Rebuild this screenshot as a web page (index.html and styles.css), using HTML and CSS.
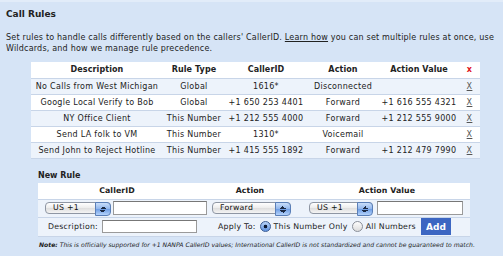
FILE: index.html
```html
<!DOCTYPE html>
<html lang="en">
<head>
    <meta charset="UTF-8">
    <title>Call Rules</title>
    <link rel="stylesheet" href="styles.css">
</head>
<body>
    <div class="page">
        <h1 class="title">Call Rules</h1>
        <p class="intro">
            Set rules to handle calls differently based on the callers' CallerID. <a href="#">Learn how</a> you can set multiple rules at once, use<br>
            Wildcards, and how we manage rule precedence.
        </p>

        <table class="rules">
            <thead>
                <tr>
                    <th class="col-desc">Description</th>
                    <th class="col-type">Rule Type</th>
                    <th class="col-id">CallerID</th>
                    <th class="col-action">Action</th>
                    <th class="col-value">Action Value</th>
                    <th class="col-del"><span class="del-all">x</span></th>
                </tr>
            </thead>
            <tbody>
                <tr>
                    <td>No Calls from West Michigan</td>
                    <td>Global</td>
                    <td>1616*</td>
                    <td>Disconnected</td>
                    <td></td>
                    <td><a href="#" class="del">X</a></td>
                </tr>
                <tr>
                    <td>Google Local Verify to Bob</td>
                    <td>Global</td>
                    <td>+1 650 253 4401</td>
                    <td>Forward</td>
                    <td>+1 616 555 4321</td>
                    <td><a href="#" class="del">X</a></td>
                </tr>
                <tr>
                    <td>NY Office Client</td>
                    <td>This Number</td>
                    <td>+1 212 555 4000</td>
                    <td>Forward</td>
                    <td>+1 212 555 9000</td>
                    <td><a href="#" class="del">X</a></td>
                </tr>
                <tr>
                    <td>Send LA folk to VM</td>
                    <td>This Number</td>
                    <td>1310*</td>
                    <td>Voicemail</td>
                    <td></td>
                    <td><a href="#" class="del">X</a></td>
                </tr>
                <tr>
                    <td>Send John to Reject Hotline</td>
                    <td>This Number</td>
                    <td>+1 415 555 1892</td>
                    <td>Forward</td>
                    <td>+1 212 479 7990</td>
                    <td><a href="#" class="del">X</a></td>
                </tr>
            </tbody>
        </table>

        <div class="new-rule">
            <h2 class="sub-title">New Rule</h2>
            <div class="rule-form">
                <div class="form-head">
                    <span class="head-id">CallerID</span>
                    <span class="head-action">Action</span>
                    <span class="head-value">Action Value</span>
                </div>
                <div class="form-row">
                    <div class="select cc-select">
                        <select><option>US +1</option></select>
                    </div>
                    <input type="text" class="field id-field">
                    <div class="select action-select">
                        <select><option>Forward</option></select>
                    </div>
                    <div class="select cc-select value-cc">
                        <select><option>US +1</option></select>
                    </div>
                    <input type="text" class="field value-field">
                </div>
                <div class="form-row desc-row">
                    <label class="desc-label">Description:</label>
                    <input type="text" class="field desc-field">
                    <span class="apply-label">Apply To:</span>
                    <label class="radio"><span class="dot checked"></span>This Number Only</label>
                    <label class="radio"><span class="dot"></span>All Numbers</label>
                    <button class="add-btn">Add</button>
                </div>
            </div>
            <p class="note"><b>Note:</b> This is officially supported for +1 NANPA CallerID values; International CallerID is not standardized and cannot be guaranteed to match.</p>
        </div>
    </div>
</body>
</html>
```

FILE: styles.css
```css
:root {
    --bg-blue: #d6e4f6;
    --row-blue: #edf3fb;
    --line: #c8d5e8;
    --text: #222;
}

* {
    margin: 0;
    padding: 0;
    box-sizing: border-box;
    font-family: 'DejaVu Sans', Verdana, sans-serif;
}

body {
    background: var(--bg-blue);
    color: var(--text);
    height: 256px;
    overflow: hidden;
    border-top: 2px solid #e2ecf9;
}

.page {
    padding: 6px 6px 0;
}

.title {
    font-size: 9px;
    font-weight: bold;
    line-height: 12px;
}

.intro {
    font-size: 8px;
    letter-spacing: 0.2px;
    line-height: 11px;
    margin-top: 12px;
    white-space: nowrap;
}

.intro a {
    color: var(--text);
}

.rules {
    margin: 8px 0 0 25px;
    width: 449px;
    border-collapse: collapse;
    background: white;
    font-size: 8px;
    letter-spacing: 0.3px;
    text-align: center;
}

.rules th {
    font-weight: bold;
    letter-spacing: 0.1px;
    height: 16px;
    border-bottom: 1px solid var(--line);
}

.rules td {
    height: 16px;
    border-bottom: 1px solid var(--line);
    white-space: nowrap;
}

.rules tbody tr:nth-child(odd) {
    background: var(--row-blue);
}

.col-desc { width: 132px; }
.col-type { width: 62px; }
.col-id { width: 82px; }
.col-action { width: 72px; }
.col-value { width: 80px; }
.col-del { width: 21px; }

.del-all {
    color: #e0141c;
    font-weight: bold;
    font-size: 8px;
}

.del {
    color: #555;
}

.new-rule {
    margin: 12px 0 0 32px;
    width: 432px;
}

.sub-title {
    font-size: 8px;
    font-weight: bold;
    line-height: 10px;
}

.rule-form {
    background: white;
    margin-top: 2px;
    font-size: 7.8px;
    letter-spacing: 0.25px;
}

.form-head {
    display: flex;
    height: 17px;
    align-items: center;
    font-weight: bold;
    letter-spacing: 0.1px;
    border-bottom: 1px solid var(--line);
}

.head-id { width: 158px; text-align: center; }
.head-action { width: 108px; text-align: center; }
.head-value { width: 166px; text-align: center; }

.form-row {
    display: flex;
    align-items: center;
    height: 18px;
    padding-left: 7px;
    background: var(--row-blue);
    border-bottom: 1px solid var(--line);
}

.select {
    position: relative;
    height: 12px;
}

.select select {
    appearance: none;
    -webkit-appearance: none;
    width: 100%;
    height: 12px;
    border: 1px solid #8e96a3;
    border-radius: 4px;
    background: linear-gradient(#ffffff, #ececec 50%, #dedede 51%, #f4f4f4);
    font-size: 7.8px;
    letter-spacing: 0.25px;
    padding-left: 7px;
    line-height: 10px;
    color: #111;
}

.select::after {
    content: '';
    position: absolute;
    top: 0;
    right: 0;
    width: 14px;
    height: 12px;
    border-radius: 0 4px 4px 0;
    border: 1px solid #5a7fb8;
    background:
        linear-gradient(to bottom right, transparent 50%, #1c2a44 50%) 4px 2.5px / 3px 3px no-repeat,
        linear-gradient(to bottom left, transparent 50%, #1c2a44 50%) 7px 2.5px / 3px 3px no-repeat,
        linear-gradient(to top right, transparent 50%, #1c2a44 50%) 4px 6.5px / 3px 3px no-repeat,
        linear-gradient(to top left, transparent 50%, #1c2a44 50%) 7px 6.5px / 3px 3px no-repeat,
        linear-gradient(#c9defa, #8fb5ec 50%, #6b9be3 51%, #b5d3fb);
}

.cc-select { width: 66px; }
.action-select { width: 79px; margin-left: 5px; }
.value-cc { width: 64px; margin-left: 18px; }

.field {
    height: 14px;
    border: 1px solid #9a9a9a;
    border-top-color: #777;
    background: white;
}

.id-field { width: 94px; margin-left: 2px; }
.value-field { width: 86px; margin-left: 4px; }

.desc-row {
    height: 19px;
    padding-left: 0;
}

.desc-label {
    width: 60px;
    text-align: right;
}

.desc-field {
    width: 95px;
    height: 13px;
    margin-left: 4px;
}

.apply-label {
    margin-left: 21px;
}

.radio {
    display: flex;
    align-items: center;
    gap: 3px;
    margin-left: 4px;
}

.dot {
    width: 11px;
    height: 11px;
    border-radius: 50%;
    border: 1px solid #8a8f99;
    background: linear-gradient(#fdfdfd, #dcdcdc);
}

.dot.checked {
    border-color: #3b5d94;
    background: radial-gradient(circle, #0d1a33 0 1.6px, transparent 2.1px), linear-gradient(#b9d4f8, #5f92df);
}

.add-btn {
    margin-left: 5px;
    height: 17px;
    width: 30px;
    border: none;
    background: #3c66c2;
    color: white;
    font-weight: bold;
    font-size: 9px;
}

.note {
    font-size: 6.1px;
    font-style: italic;
    white-space: nowrap;
    margin-top: 4px;
    padding-left: 1px;
}
```
